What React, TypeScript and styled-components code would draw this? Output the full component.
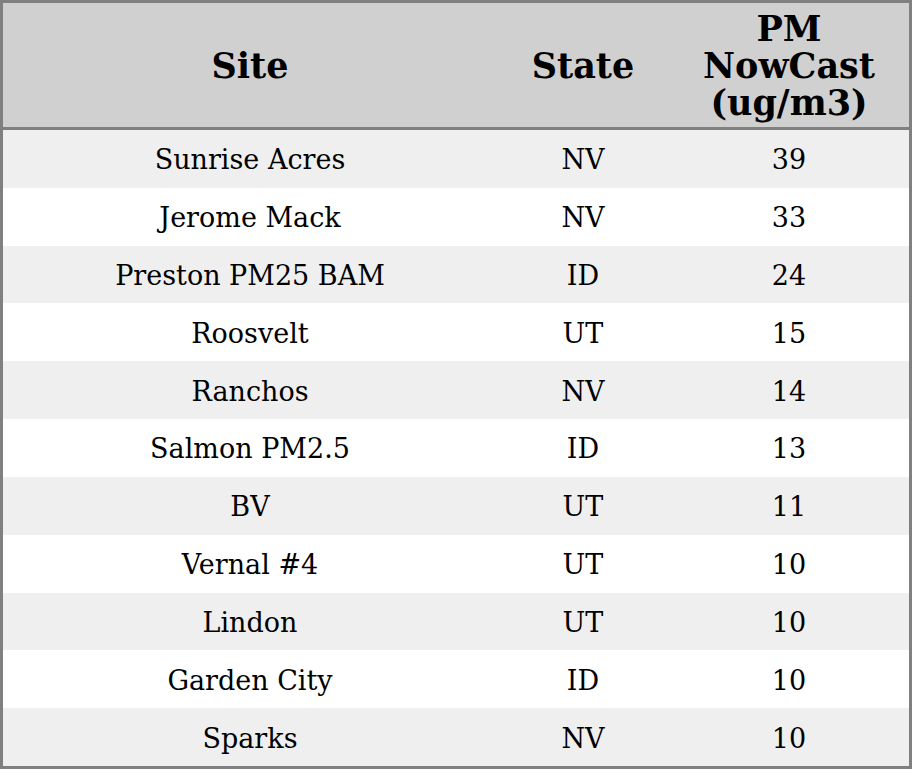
import React from "react";
import styled, { createGlobalStyle } from "styled-components";

const GlobalStyle = createGlobalStyle`
  html, body {
    margin: 0;
    padding: 0;
    background: #ffffff;
  }
`;

const Table = styled.table`
  width: 912px;
  height: 769px;
  border-collapse: collapse;
  border: 3px solid #808080;
  box-sizing: border-box;
  font-family: "DejaVu Serif", serif;
  color: #000;
  table-layout: fixed;
`;

const HeadRow = styled.tr`
  background: #d0d0d0;
  border-bottom: 3px solid #808080;
  height: 127px;
`;

const Th = styled.th<{ $w: number }>`
  width: ${(p) => p.$w}px;
  font-size: 35px;
  font-weight: bold;
  line-height: 37px;
  text-align: center;
  padding: 0;
`;

const Row = styled.tr<{ $alt: boolean }>`
  background: ${(p) => (p.$alt ? "#efefef" : "#ffffff")};
`;

const Td = styled.td`
  font-size: 27px;
  line-height: 32px;
  text-align: center;
  padding: 3px 0 0;
  height: 54px;
`;

interface ISite {
  site: string;
  state: string;
  pm: number;
}

const sites: ISite[] = [
  { site: "Sunrise Acres", state: "NV", pm: 39 },
  { site: "Jerome Mack", state: "NV", pm: 33 },
  { site: "Preston PM25 BAM", state: "ID", pm: 24 },
  { site: "Roosvelt", state: "UT", pm: 15 },
  { site: "Ranchos", state: "NV", pm: 14 },
  { site: "Salmon PM2.5", state: "ID", pm: 13 },
  { site: "BV", state: "UT", pm: 11 },
  { site: "Vernal #4", state: "UT", pm: 10 },
  { site: "Lindon", state: "UT", pm: 10 },
  { site: "Garden City", state: "ID", pm: 10 },
  { site: "Sparks", state: "NV", pm: 10 },
];

const App = () => {
  return (
    <>
      <GlobalStyle />
      <Table>
        <thead>
          <HeadRow>
            <Th $w={494}>Site</Th>
            <Th $w={172}>State</Th>
            <Th $w={240}>
              PM
              <br />
              NowCast
              <br />
              (ug/m3)
            </Th>
          </HeadRow>
        </thead>
        <tbody>
          {sites.map((s, i) => (
            <Row key={s.site} $alt={i % 2 === 0}>
              <Td>{s.site}</Td>
              <Td>{s.state}</Td>
              <Td>{s.pm}</Td>
            </Row>
          ))}
        </tbody>
      </Table>
    </>
  );
};

export default App;
